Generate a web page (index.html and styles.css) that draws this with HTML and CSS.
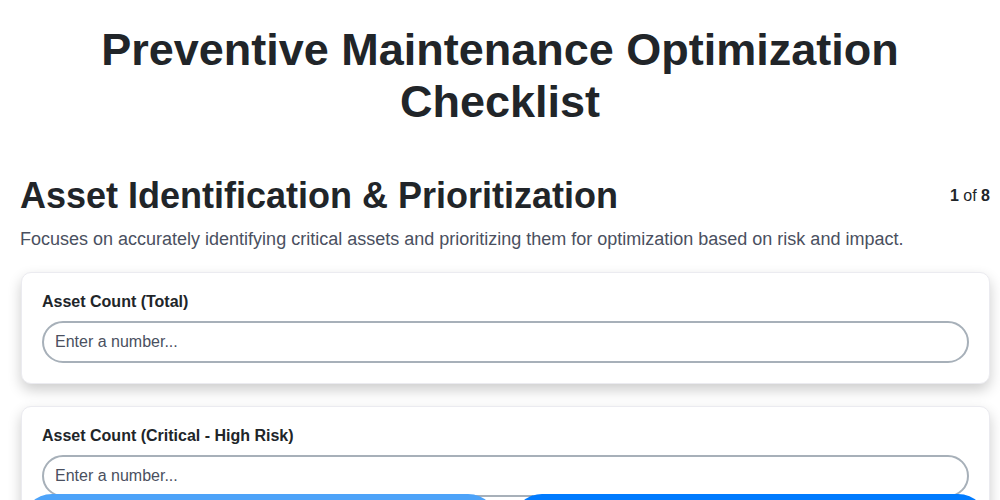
FILE: index.html
```html
<!DOCTYPE html>
<html lang="en">
<head>
<meta charset="utf-8">
<title>Preventive Maintenance Optimization Checklist</title>
<link rel="stylesheet" href="styles.css">
</head>
<body>
<div class="page">
  <h1 class="title">Preventive Maintenance Optimization Checklist</h1>
  <section class="step">
    <div class="step-head">
      <h2 class="step-title">Asset Identification &amp; Prioritization</h2>
      <div class="step-count"><b>1</b> of <b>8</b></div>
    </div>
    <p class="step-desc">Focuses on accurately identifying critical assets and prioritizing them for optimization based on risk and impact.</p>
    <div class="card">
      <label class="field-label" for="f1">Asset Count (Total)</label>
      <input class="field-input" id="f1" type="text" placeholder="Enter a number...">
    </div>
    <div class="card">
      <label class="field-label" for="f2">Asset Count (Critical - High Risk)</label>
      <input class="field-input" id="f2" type="text" placeholder="Enter a number...">
    </div>
  </section>
</div>
<nav class="nav">
  <button class="btn btn-prev" type="button">Previous</button>
  <button class="btn btn-next" type="button">Next</button>
</nav>
</body>
</html>
```
FILE: styles.css
```css
* { box-sizing: border-box; }
html, body { margin: 0; padding: 0; background: #ffffff; }
body {
  font-family: "Liberation Sans", Arial, sans-serif;
  color: #212529;
}
.page {
  padding: 24px 10px 40px 20px;
}
.title {
  margin: 0 -10px 46px -20px;
  text-align: center;
  font-size: 45px;
  line-height: 52px;
  font-weight: 700;
  color: #212529;
}
.step-head {
  display: flex;
  justify-content: space-between;
  align-items: center;
}
.step-title {
  margin: 0;
  font-size: 36px;
  line-height: 44px;
  font-weight: 700;
}
.step-count {
  font-size: 16px;
  color: #212529;
}
.step-desc {
  margin: 9px 0 21px;
  font-size: 18px;
  line-height: 24px;
  color: #4a5060;
}
.card {
  margin: 0 0 22px 1px;
  padding: 20px 20px 20px;
  background: #fff;
  border: 1px solid #ebebf0;
  border-radius: 10px;
  box-shadow: 0 6px 14px rgba(0, 0, 0, 0.2);
}
.field-label {
  display: block;
  margin: 0 0 10px;
  font-size: 16px;
  line-height: 18px;
  font-weight: 700;
  color: #212529;
}
.field-input {
  display: block;
  width: 100%;
  height: 42px;
  padding: 0 11px;
  border: 2px solid #a7b0b9;
  border-radius: 21px;
  font-family: "Liberation Sans", Arial, sans-serif;
  font-size: 16px;
  color: #212529;
  background: #fff;
  outline: none;
}
.field-input::placeholder { color: #4a5060; opacity: 1; }
.nav {
  position: fixed;
  left: 22px;
  right: 12px;
  top: 494px;
  display: flex;
  gap: 14px;
}
.btn {
  flex: 1;
  height: 60px;
  border: none;
  border-radius: 30px;
  color: #fff;
  font-family: "Liberation Sans", Arial, sans-serif;
  font-size: 16px;
  font-weight: 700;
}
.btn-prev { background: #4da3f9; }
.btn-next { background: #007bff; }
```
